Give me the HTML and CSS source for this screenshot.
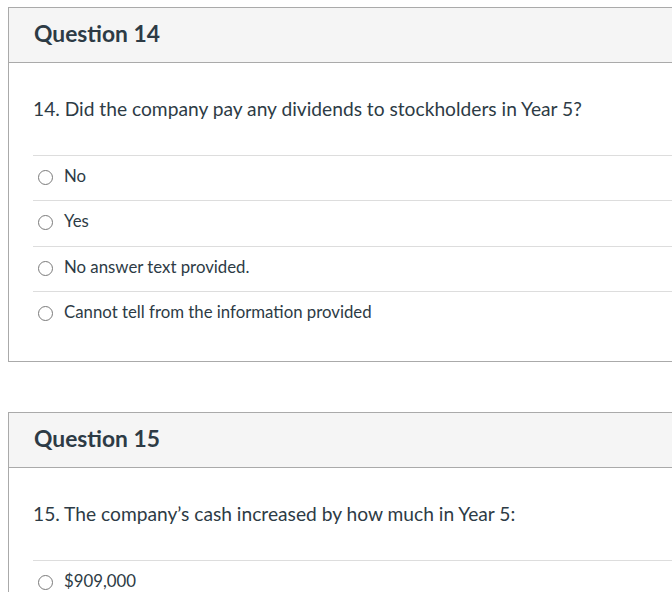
FILE: index.html
```html
<!DOCTYPE html>
<html>
<head>
<meta charset="utf-8">
<link rel="stylesheet" href="styles.css">
</head>
<body>
<div class="quiz">
  <section class="card">
    <header class="card-header"><h2>Question 14</h2></header>
    <div class="card-body">
      <p class="question">14. Did the company pay any dividends to stockholders in Year 5?</p>
      <ul class="answers">
        <li class="answer"><span class="radio"></span><span>No</span></li>
        <li class="answer"><span class="radio"></span><span>Yes</span></li>
        <li class="answer"><span class="radio"></span><span>No answer text provided.</span></li>
        <li class="answer"><span class="radio"></span><span>Cannot tell from the information provided</span></li>
      </ul>
    </div>
  </section>
  <section class="card">
    <header class="card-header"><h2>Question 15</h2></header>
    <div class="card-body">
      <p class="question">15. The company’s cash increased by how much in Year 5:</p>
      <ul class="answers">
        <li class="answer"><span class="radio"></span><span>$909,000</span></li>
      </ul>
    </div>
  </section>
</div>
</body>
</html>
```

FILE: styles.css
```css
html, body {
  margin: 0;
  padding: 0;
  overflow: hidden;
  background: #fff;
}
body {
  font-family: Lato, "Liberation Sans", sans-serif;
  color: #2d3b45;
  padding: 7px 0 0 8px;
}
.quiz {
  display: flex;
  flex-direction: column;
  gap: 50px;
  width: 720px;
}
.card {
  border: 1px solid #aaaaaa;
  border-right: none;
}
.card-header {
  background: #f5f5f5;
  border-bottom: 1px solid #aaaaaa;
  height: 55px;
  box-sizing: border-box;
  display: flex;
  align-items: center;
  padding: 0 0 5px 25px;
}
.card-header h2 {
  margin: 0;
  font-size: 22.8px;
  line-height: 28px;
  font-weight: 700;
  color: #2d3b45;
}
.card-body {
  padding: 0 0 25px 24px;
}
.question {
  margin: 0;
  font-size: 19.2px;
  line-height: 28px;
  padding: 32px 0 32px 0;
}
.answers {
  list-style: none;
  margin: 0;
  padding: 0;
}
.answer {
  display: flex;
  align-items: flex-start;
  gap: 11px;
  border-top: 1px solid #dddddd;
  height: 45.3px;
  box-sizing: border-box;
  font-size: 16.8px;
  line-height: 20px;
  padding: 10px 0 0 5px;
}
.radio {
  width: 13px;
  height: 13px;
  margin-top: 4px;
  border: 1px solid #7a7a7a;
  border-radius: 50%;
  flex: none;
}
```
